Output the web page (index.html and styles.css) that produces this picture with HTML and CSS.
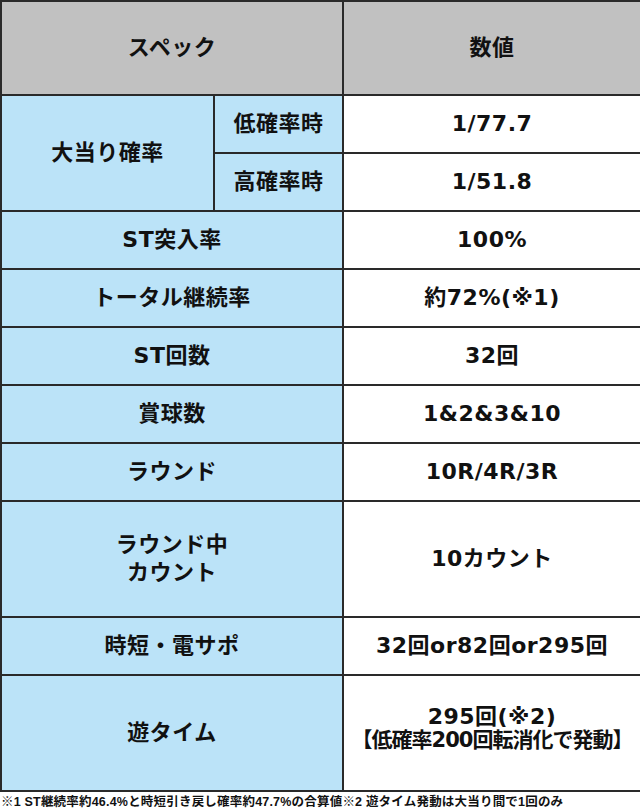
FILE: index.html
```html
<!DOCTYPE html>
<html lang="ja">
<head>
<meta charset="utf-8">
<title>スペック</title>
<link rel="stylesheet" href="styles.css">
</head>
<body>
<table class="spec">
  <colgroup>
    <col class="c1"><col class="c2"><col class="c3">
  </colgroup>
  <tr class="head">
    <th colspan="2">スペック</th>
    <th>数値</th>
  </tr>
  <tr>
    <td class="label" rowspan="2">大当り確率</td>
    <td class="label">低確率時</td>
    <td class="val">1/77.7</td>
  </tr>
  <tr>
    <td class="label">高確率時</td>
    <td class="val">1/51.8</td>
  </tr>
  <tr><td class="label" colspan="2">ST突入率</td><td class="val">100%</td></tr>
  <tr><td class="label" colspan="2">トータル継続率</td><td class="val">約72%(※1)</td></tr>
  <tr><td class="label" colspan="2">ST回数</td><td class="val">32回</td></tr>
  <tr><td class="label" colspan="2">賞球数</td><td class="val">1&amp;2&amp;3&amp;10</td></tr>
  <tr><td class="label" colspan="2">ラウンド</td><td class="val">10R/4R/3R</td></tr>
  <tr class="tall"><td class="label" colspan="2">ラウンド中<br>カウント</td><td class="val">10カウント</td></tr>
  <tr><td class="label" colspan="2">時短・電サポ</td><td class="val">32回or82回or295回</td></tr>
  <tr class="tall"><td class="label" colspan="2">遊タイム</td><td class="val two">295回(※2)<br><span class="tight">【低確率200回転消化で発動】</span></td></tr>
</table>
<p class="note">※1 ST継続率約46.4%と時短引き戻し確率約47.7%の合算値※2 遊タイム発動は大当り間で1回のみ</p>
</body>
</html>
```
FILE: styles.css
```css
html, body {
  margin: 0;
  padding: 0;
  background: #ffffff;
}
body {
  font-family: "Liberation Sans", "Noto Sans CJK JP", sans-serif;
  font-weight: bold;
  color: #111111;
}
.spec {
  width: 640px;
  border-collapse: collapse;
  table-layout: fixed;
}
.c1 { width: 213px; }
.c2 { width: 129px; }
.c3 { width: 298px; }
.spec th,
.spec td {
  border: 2px solid #2a2a2a;
  text-align: center;
  vertical-align: middle;
  padding: 0;
  font-family: "DejaVu Sans", "Noto Sans CJK JP", sans-serif;
  font-size: 22px;
  font-weight: bold;
  letter-spacing: 0.5px;
  line-height: 28px;
  height: 56px;
}
.spec .head th {
  background: #c1c1c1;
  height: 92px;
}
.spec .tall td {
  height: 114px;
}
.spec td.label {
  background: #bbe3f8;
}
.spec td.val {
  background: #ffffff;
}
.spec .tall td.two {
  line-height: 23px;
  height: 104px;
  padding-bottom: 10px;
}
.tight {
  font-size: 21px;
  letter-spacing: -1px;
  white-space: nowrap;
}
.note {
  margin: 0;
  padding: 2px 0 0 1px;
  font-size: 12.5px;
  line-height: 16px;
  letter-spacing: 0.2px;
  white-space: nowrap;
}
```
